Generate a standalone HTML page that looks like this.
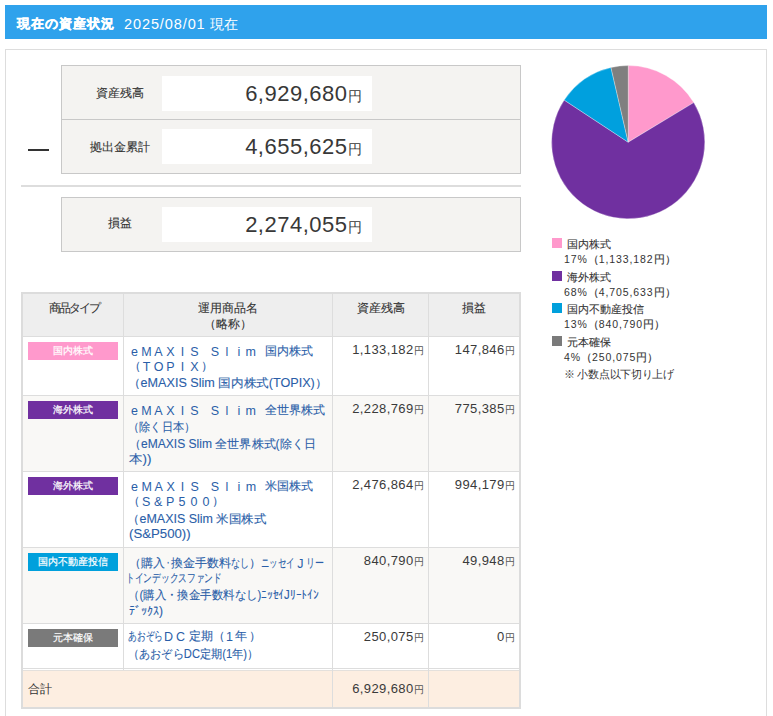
<!DOCTYPE html>
<html lang="ja">
<head>
<meta charset="utf-8">
<style>
*{box-sizing:border-box;margin:0;padding:0}
html,body{width:773px;height:716px;overflow:hidden;background:#fff}
body{position:relative;font-family:"Liberation Sans",sans-serif;color:#333}
div,span{position:absolute;white-space:nowrap}
#hdr{left:5px;top:5px;width:762px;height:34px;background:#2fa2ec;color:#fff;font-size:14px;line-height:34px}
#hdr .t{left:12px;top:2px;font-weight:bold;font-size:13px;letter-spacing:1px;-webkit-text-stroke:0.4px #fff}
#hdr .d{left:119px;top:2px;font-size:14.5px;letter-spacing:0.9px}
#hdr .d2{left:205px;top:2px;font-size:14px}
#panel{left:5px;top:49px;width:762px;height:700px;border:1px solid #ddd;background:#fff}
.box{left:61px;width:460px;background:#f4f3f1;border:1px solid #c8c8c8}
.lab{left:8px;width:100px;text-align:center;font-size:12px;line-height:16px;color:#333;-webkit-text-stroke:0.1px #333}
.val{left:100px;width:210px;height:35px;background:#fff;text-align:right;font-size:22px;line-height:35px;padding-right:10px;color:#383838;letter-spacing:0.5px}
.val span,.num span{position:static}
.val span{font-size:14px}
#dash{left:28px;top:149px;width:21px;height:2px;background:#333}
#sep{left:21px;top:185px;width:500px;height:2px;background:#ddd}
.hl{left:23px;width:496px;height:1px;background:#ddd}
.vl{width:1px;background:#ddd}
.th{font-size:12px;line-height:16px;text-align:center;color:#333;-webkit-text-stroke:0.1px #333}
.badge{left:28px;width:90px;height:18px;line-height:18px;font-size:10px;color:#fff;text-align:center;-webkit-text-stroke:0.2px #fff}
.nm{left:128px;font-size:12px;line-height:16px;color:#2a5ea8;transform-origin:0 0;-webkit-text-stroke:0.1px #2a5ea8}
.num{font-size:13px;line-height:16px;color:#3a3a3a;text-align:right;letter-spacing:0.4px}
.num span{font-size:10px;color:#555}
.nmt span{position:relative;display:inline-block;white-space:nowrap}
.nmt .fl{font-size:12.5px;text-align:center;top:-1px;-webkit-text-stroke:0}
.nmt .fk{top:-2px}
.nmt .fs{height:1px}
.c3{left:333px;width:91px}
.c4{left:429px;width:86px}
.lg{left:552px;width:10px;height:10px}
.lt{left:567px;font-size:11px;line-height:16px;color:#333;-webkit-text-stroke:0.1px #333}
.lv{left:564px;font-size:12px;line-height:16px;color:#333}
.lv span{position:relative;display:inline-block}
.lv .n{font-size:10.5px;letter-spacing:0.9px}
.lv .p{font-size:11px;-webkit-text-stroke:0.15px #333}
</style>
</head>
<body>
<div id="hdr"><div class="t">現在の資産状況</div><div class="d">2025/08/01</div><div class="d2">現在</div></div>
<div id="panel"></div>

<div class="box" style="top:65px;height:109px">
  <div class="lab" style="top:19px">資産残高</div>
  <div class="val" style="top:10px">6,929,680<span>円</span></div>
  <div style="left:0;top:53px;width:458px;height:1px;background:#c8c8c8"></div>
  <div class="lab" style="top:73px">拠出金累計</div>
  <div class="val" style="top:63px">4,655,625<span>円</span></div>
</div>
<div id="dash"></div>
<div id="sep"></div>
<div class="box" style="top:197px;height:55px">
  <div class="lab" style="top:17px">損益</div>
  <div class="val" style="top:9px">2,274,055<span>円</span></div>
</div>

<svg style="position:absolute;left:540px;top:55px" width="180" height="180" viewBox="540 55 180 180">
<g stroke="#fff" stroke-width="0.6" stroke-opacity="0.5" stroke-linejoin="round">
<path d="M628.2 142.2L628.20 65.60A76.6 76.6 0 0 1 693.77 102.60Z" fill="#ff99cc"/>
<path d="M628.2 142.2L693.77 102.60A76.6 76.6 0 1 1 564.20 100.11Z" fill="#7030a0"/>
<path d="M628.2 142.2L564.20 100.11A76.6 76.6 0 0 1 610.98 67.56Z" fill="#00a0de"/>
<path d="M628.2 142.2L610.98 67.56A76.6 76.6 0 0 1 628.20 65.60Z" fill="#7f7f7f"/>
</g>
</svg>

<!-- table -->
<div style="left:21px;top:292px;width:500px;height:417px;border:2px solid #dcdcdc;background:#fff"></div>
<div style="left:23px;top:294px;width:496px;height:42px;background:#eee"></div>
<div style="left:23px;top:396px;width:496px;height:75px;background:#f9f8f6"></div>
<div style="left:23px;top:548px;width:496px;height:75px;background:#f9f8f6"></div>
<div style="left:23px;top:671px;width:496px;height:36px;background:#fdeee1"></div>
<div class="hl" style="top:336px"></div>
<div class="hl" style="top:395px"></div>
<div class="hl" style="top:471px"></div>
<div class="hl" style="top:547px"></div>
<div class="hl" style="top:623px"></div>
<div class="hl" style="top:668px"></div>
<div class="hl" style="top:670px;background:#e4e0dc"></div>
<div class="vl" style="left:123px;top:294px;height:376px"></div>
<div class="vl" style="left:332px;top:294px;height:413px"></div>
<div class="vl" style="left:428px;top:294px;height:413px"></div>

<div class="th" style="left:23px;width:100px;top:300px;letter-spacing:-2px;padding-left:2px">商品タイプ</div>
<div class="th" style="left:124px;width:208px;top:300px">運用商品名<br>（略称）</div>
<div class="th" style="left:333px;width:95px;top:300px">資産残高</div>
<div class="th" style="left:429px;width:90px;top:300px">損益</div>

<div class="badge" style="top:342px;background:#ff99cc">国内株式</div>
<div class="badge" style="top:401px;background:#7030a0">海外株式</div>
<div class="badge" style="top:477px;background:#7030a0">海外株式</div>
<div class="badge" style="top:553px;background:#00a0dc">国内不動産投信</div>
<div class="badge" style="top:629px;background:#7a7a7a">元本確保</div>

<div class="nm nmt" id="r1a" style="top:345px;left:128.5px"><span class="fl" style="width:12px">e</span><span class="fl" style="width:12px">M</span><span class="fl" style="width:12px">A</span><span class="fl" style="width:12px">X</span><span class="fl" style="width:12px">I</span><span class="fl" style="width:12px">S</span><span class="fs" style="width:8.3px;margin-left:0px"></span><span class="fl" style="width:12px">S</span><span class="fl" style="width:12px">l</span><span class="fl" style="width:12px">i</span><span class="fl" style="width:12px">m</span><span class="fs" style="width:8.3px;margin-left:0px"></span><span class="fk" style="width:48px">国内株式</span></div>
<div class="nm nmt" id="r1b" style="top:360px;left:128.5px"><span class="fk" style="width:12px">（</span><span class="fl" style="width:12px">T</span><span class="fl" style="width:12px">O</span><span class="fl" style="width:12px">P</span><span class="fl" style="width:12px">I</span><span class="fl" style="width:12px">X</span><span class="fk" style="width:12px">）</span></div>
<div class="nm" id="r1c" style="top:375px;left:128.34px;transform:scaleX(1.0506)">（eMAXIS Slim 国内株式(TOPIX)）</div>
<div class="nm nmt" id="r2a" style="top:404px;left:128.5px"><span class="fl" style="width:12px">e</span><span class="fl" style="width:12px">M</span><span class="fl" style="width:12px">A</span><span class="fl" style="width:12px">X</span><span class="fl" style="width:12px">I</span><span class="fl" style="width:12px">S</span><span class="fs" style="width:8.3px;margin-left:0px"></span><span class="fl" style="width:12px">S</span><span class="fl" style="width:12px">l</span><span class="fl" style="width:12px">i</span><span class="fl" style="width:12px">m</span><span class="fs" style="width:8.3px;margin-left:0px"></span><span class="fk" style="width:60px">全世界株式</span></div>
<div class="nm" id="r2b" style="top:419px;left:128.35px;transform:scaleX(0.9332)">（除く日本）</div>
<div class="nm" id="r2c" style="top:436px;left:128.67px;transform:scaleX(1.0040)">（eMAXIS Slim 全世界株式(除く日</div>
<div class="nm" id="r2d" style="top:451px;left:129.00px;transform:scaleX(1.1212)">本))</div>
<div class="nm nmt" id="r3a" style="top:480px;left:128.6px"><span class="fl" style="width:12px">e</span><span class="fl" style="width:12px">M</span><span class="fl" style="width:12px">A</span><span class="fl" style="width:12px">X</span><span class="fl" style="width:12px">I</span><span class="fl" style="width:12px">S</span><span class="fs" style="width:8.3px;margin-left:0px"></span><span class="fl" style="width:12px">S</span><span class="fl" style="width:12px">l</span><span class="fl" style="width:12px">i</span><span class="fl" style="width:12px">m</span><span class="fs" style="width:8.3px;margin-left:0px"></span><span class="fk" style="width:48px">米国株式</span></div>
<div class="nm nmt" id="r3b" style="top:495px;left:128.1px"><span class="fk" style="width:12px">（</span><span class="fl" style="width:12px">S</span><span class="fl" style="width:12px">&amp;</span><span class="fl" style="width:12px">P</span><span class="fl" style="width:12px">5</span><span class="fl" style="width:12px">0</span><span class="fl" style="width:12px">0</span><span class="fk" style="width:12px">）</span></div>
<div class="nm" id="r3c" style="top:511px;left:127.42px;transform:scaleX(1.0402)">（eMAXIS Slim 米国株式</div>
<div class="nm" id="r3d" style="top:526px;left:129.00px;transform:scaleX(1.1000)">(S&amp;P500))</div>
<div class="nm nmt" id="r4a" style="top:557px;left:128.5px"><span class="fk" style="width:12px">（</span><span class="fk" style="width:24px">購入</span><span class="fk" style="width:6px"><i style="display:inline-block;font-style:normal;transform:scaleX(0.5000);transform-origin:0 0">・</i></span><span class="fk" style="width:60px">換金手数料</span><span class="fk" style="width:18px"><i style="display:inline-block;font-style:normal;transform:scaleX(0.7500);transform-origin:0 0">なし</i></span><span class="fk" style="width:12px">）</span><span class="fs" style="width:0px;margin-left:0px"></span><span class="fk" style="width:33.8px"><i style="display:inline-block;font-style:normal;transform:scaleX(0.7042);transform-origin:0 0">ニッセイ</i></span><span class="fl" style="width:12px">J</span><span class="fk" style="width:18px"><i style="display:inline-block;font-style:normal;transform:scaleX(0.7500);transform-origin:0 0">リー</i></span></div>
<div class="nm" id="r4b" style="top:570px;left:126.10px;transform:scaleX(0.7260)">トインデックスファンド</div>
<div class="nm" id="r4c" style="top:587px;left:128.24px;transform:scaleX(0.9518)">（(購入・換金手数料なし)ﾆｯｾｲJﾘｰﾄｲﾝ</div>
<div class="nm" id="r4d" style="top:603px;left:129.00px;transform:scaleX(1.0000)">ﾃﾞｯｸｽ)</div>
<div class="nm nmt" id="r5a" style="top:630px;left:127.5px"><span class="fk" style="width:35px"><i style="display:inline-block;font-style:normal;transform:scaleX(0.7292);transform-origin:0 0">あおぞら</i></span><span class="fl" style="width:12px">D</span><span class="fl" style="width:12px">C</span><span class="fs" style="width:2.5px;margin-left:0px"></span><span class="fk" style="width:24px">定期</span><span class="fs" style="width:0px;margin-left:-0.5px"></span><span class="fk" style="width:12px">（</span><span class="fl" style="width:10px">1</span><span class="fk" style="width:12px">年</span><span class="fs" style="width:2px;margin-left:0px"></span><span class="fk" style="width:12px">）</span></div>
<div class="nm" id="r5b" style="top:646px;left:128.38px;transform:scaleX(0.9303)">（あおぞらDC定期(1年)）</div>
<div class="num c3" style="top:342px">1,133,182<span>円</span></div>
<div class="num c4" style="top:342px">147,846<span>円</span></div>
<div class="num c3" style="top:401px">2,228,769<span>円</span></div>
<div class="num c4" style="top:401px">775,385<span>円</span></div>
<div class="num c3" style="top:477px">2,476,864<span>円</span></div>
<div class="num c4" style="top:477px">994,179<span>円</span></div>
<div class="num c3" style="top:553px">840,790<span>円</span></div>
<div class="num c4" style="top:553px">49,948<span>円</span></div>
<div class="num c3" style="top:629px">250,075<span>円</span></div>
<div class="num c4" style="top:629px">0<span>円</span></div>
<div class="th" style="left:28px;top:681px;text-align:left;-webkit-text-stroke:0">合計</div>
<div class="num c3" style="top:681px">6,929,680<span>円</span></div>

<!-- legend -->
<div class="lg" style="top:238px;background:#ff99cc"></div>
<div class="lt" style="top:236px">国内株式</div>
<div class="lv" style="top:251px"><span class="n">17%</span><span class="p">（</span><span class="n">1,133,182</span><span class="p">円）</span></div>
<div class="lg" style="top:271px;background:#7030a0"></div>
<div class="lt" style="top:269px">海外株式</div>
<div class="lv" style="top:284px"><span class="n">68%</span><span class="p">（</span><span class="n">4,705,633</span><span class="p">円）</span></div>
<div class="lg" style="top:303px;background:#00a0dc"></div>
<div class="lt" style="top:301px">国内不動産投信</div>
<div class="lv" style="top:316px"><span class="n">13%</span><span class="p">（</span><span class="n">840,790</span><span class="p">円）</span></div>
<div class="lg" style="top:336px;background:#7a7a7a"></div>
<div class="lt" style="top:334px">元本確保</div>
<div class="lv" style="top:349px"><span class="n">4%</span><span class="p">（</span><span class="n">250,075</span><span class="p">円）</span></div>
<div class="lv" style="top:366px;font-size:11px;letter-spacing:-0.3px">※ 小数点以下切り上げ</div>
</body>
</html>
